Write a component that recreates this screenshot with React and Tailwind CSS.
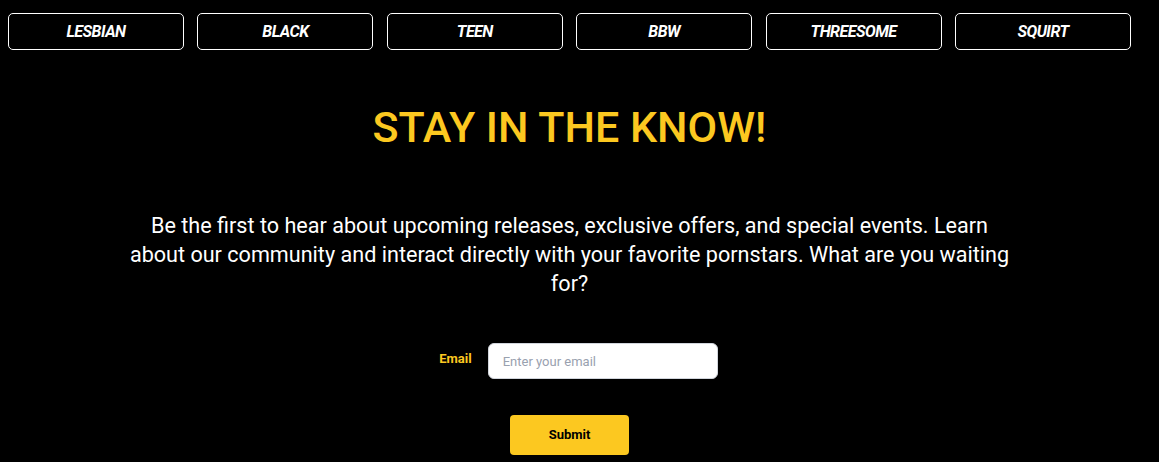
const categories = ['LESBIAN', 'BLACK', 'TEEN', 'BBW', 'THREESOME', 'SQUIRT'];

const App = () => {
  return (
    <div
      className="min-h-[462px] bg-black text-white"
      style={{ fontFamily: 'Roboto, "Liberation Sans", sans-serif' }}
    >
      <div className="w-[1139px]">
        <div className="flex gap-[13.4px] px-2 pt-[13px]">
          {categories.map((c) => (
            <a
              key={c}
              href="#"
              className="flex h-[37px] w-[176px] items-center justify-center rounded-[5px] border border-white text-[16px] font-bold italic tracking-[-0.5px] text-white"
            >
              {c}
            </a>
          ))}
        </div>

        <h2 className="mt-[51px] text-center text-[43px] font-medium leading-[52px] text-[#fcc820]">
          STAY IN THE KNOW!
        </h2>

        <p className="mx-auto mt-[58px] max-w-[888px] text-center text-[21.6px] leading-[29px] text-white">
          Be the first to hear about upcoming releases, exclusive offers, and
          special events. Learn about our community and interact directly with
          your favorite pornstars. What are you waiting for?
        </p>

        <form className="mt-[45px] flex flex-col items-center">
          <div className="flex items-center gap-[16px] pl-[18px]">
            <label className="pb-[4px] text-[13px] font-bold text-[#fcc820]">
              Email
            </label>
            <input
              type="email"
              placeholder="Enter your email"
              className="h-[36px] w-[230px] rounded-[6px] border border-gray-300 bg-white px-[14px] text-[13px] text-black placeholder:text-gray-400 outline-none"
            />
          </div>
          <button
            type="submit"
            className="mt-[36px] h-[40px] w-[119px] rounded-[4px] bg-[#fcc820] text-[13px] font-bold text-black"
          >
            Submit
          </button>
        </form>
      </div>
    </div>
  );
};

export default App;
